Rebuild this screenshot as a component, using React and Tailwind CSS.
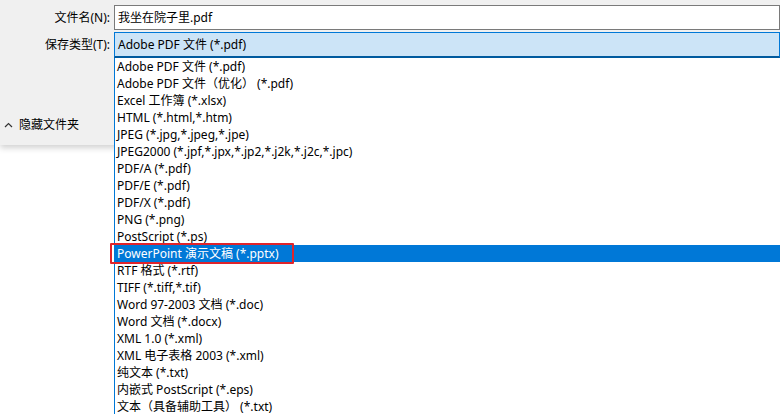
import React from 'react'

const fileTypes = [
  'Adobe PDF 文件 (*.pdf)',
  'Adobe PDF 文件（优化） (*.pdf)',
  'Excel 工作簿 (*.xlsx)',
  'HTML (*.html,*.htm)',
  'JPEG (*.jpg,*.jpeg,*.jpe)',
  'JPEG2000 (*.jpf,*.jpx,*.jp2,*.j2k,*.j2c,*.jpc)',
  'PDF/A (*.pdf)',
  'PDF/E (*.pdf)',
  'PDF/X (*.pdf)',
  'PNG (*.png)',
  'PostScript (*.ps)',
  'PowerPoint 演示文稿 (*.pptx)',
  'RTF 格式 (*.rtf)',
  'TIFF (*.tiff,*.tif)',
  'Word 97-2003 文档 (*.doc)',
  'Word 文档 (*.docx)',
  'XML 1.0 (*.xml)',
  'XML 电子表格 2003 (*.xml)',
  '纯文本 (*.txt)',
  '内嵌式 PostScript (*.eps)',
  '文本（具备辅助工具） (*.txt)',
]

const SELECTED = 11

export default function App() {
  return (
    <div
      className="relative w-[780px] h-[414px] overflow-hidden bg-white text-[12px] text-black"
      style={{ fontFamily: '"Noto Sans", "Noto Sans CJK SC", sans-serif' }}
    >
      {/* dialog body */}
      <div className="h-[145px] bg-[#f0f0f0] shadow-[0_3px_6px_rgba(0,0,0,0.18)] pt-[5px]">
        <div className="flex items-center h-[25px]">
          <div className="w-[114px] pr-[4px] text-right">文件名(N):</div>
          <div className="flex-1 h-[25px] border border-[#7a7a7a] bg-white flex items-center pl-[3px]">
            我坐在院子里.pdf
          </div>
        </div>
        <div className="flex items-center h-[26px] mt-[2px]">
          <div className="w-[114px] pr-[4px] text-right">保存类型(T):</div>
          <div className="flex-1 h-[26px] border-t border-x border-b-2 border-[#0078d7] border-b-[#005a9e] bg-[#cce4f7] flex items-center pl-[3px]">
            Adobe PDF 文件 (*.pdf)
          </div>
        </div>
        <div className="flex items-center mt-[58px] pl-[4px] gap-[6px] h-[17px]">
          <svg width="9" height="6" viewBox="0 0 9 6" fill="none" stroke="#333" strokeWidth="1.2">
            <path d="M1 5 L4.5 1.5 L8 5" />
          </svg>
          <span>隐藏文件夹</span>
        </div>
      </div>

      {/* open dropdown list */}
      <div className="absolute left-[114px] top-[58px] right-0 bottom-0 bg-white border-l border-[#0078d7]">
        {fileTypes.map((t, i) => (
          <div
            key={t}
            className={
              i === SELECTED
                ? 'relative h-[17px] leading-[17px] pl-[2px] bg-[#0078d7] text-white'
                : 'h-[17px] leading-[17px] pl-[2px] whitespace-nowrap'
            }
          >
            {t}
            {i === SELECTED && (
              <div className="absolute left-[-5px] top-[-2px] w-[184px] h-[21px] border-2 border-[#e0242b] rounded-[1px]" />
            )}
          </div>
        ))}
      </div>
    </div>
  )
}
